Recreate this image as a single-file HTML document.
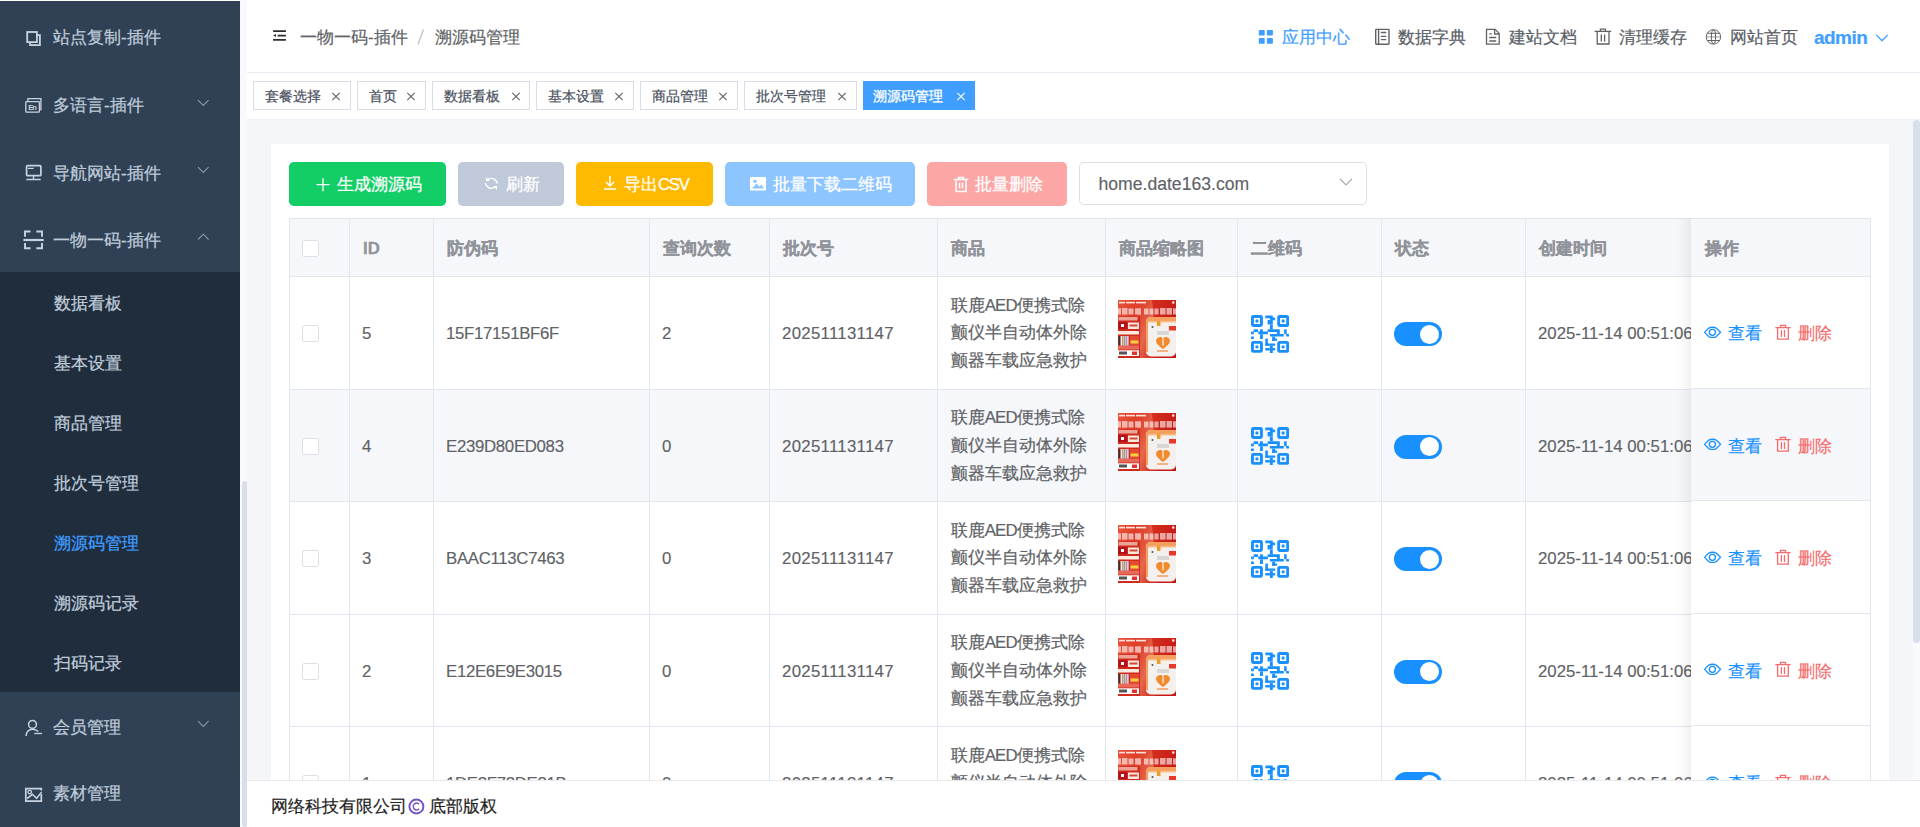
<!DOCTYPE html>
<html><head><meta charset="utf-8">
<style>
*{box-sizing:border-box;margin:0;padding:0}
html,body{width:1920px;height:827px;overflow:hidden;background:#fff;font-family:"Liberation Sans",sans-serif;}
.side{position:absolute;left:0;top:1px;width:240px;height:826px;background:#304156;overflow:hidden}
.side .topl{position:absolute;left:0;top:0;width:240px;height:1px;background:#3d4d63}
.mi{position:absolute;left:0;width:240px;height:67.2px;color:#bfcbd9;font-size:16.8px;line-height:67.2px}
.mi .tx{position:absolute;left:53px;top:2px;white-space:nowrap;-webkit-text-stroke:0.25px #bfcbd9}
.mi .ar{position:absolute;left:196.5px;top:28.2px}
.sic{position:absolute}
.sub{position:absolute;left:0;top:271px;width:240px;height:420px;background:#1f2d3d}
.si{position:absolute;left:54px;height:60px;line-height:60px;padding-top:2px;color:#bfcbd9;font-size:16.8px;white-space:nowrap;-webkit-text-stroke:0.25px #bfcbd9}
.si.act{color:#409eff;-webkit-text-stroke:0.25px #409eff}
.sbar{position:absolute;left:240px;top:0;width:7px;height:827px;background:#f9fafd}
.sbar .th{position:absolute;left:1px;top:481px;width:6px;height:346px;background:#d9deec;border-radius:3px}
.hdr{position:absolute;left:247px;top:0;width:1673px;height:72.5px;background:#fff;border-bottom:1px solid #e9ecf3}
.abs{position:absolute}
.bc{position:absolute;top:2px;height:72px;line-height:72px;font-size:16.8px;color:#606266;white-space:nowrap;-webkit-text-stroke:0.2px #606266}
.hr{position:absolute;top:2px;height:72px;line-height:72px;font-size:16.8px;color:#5a5e66;white-space:nowrap;-webkit-text-stroke:0.2px currentColor}
.tags{position:absolute;left:247px;top:72.5px;width:1673px;height:47.5px;background:#fff;border-bottom:1px solid #eceff5}
.tag{position:absolute;top:8.5px;height:28.8px;border:1px solid #d8dce5;background:#fff;color:#495060;font-size:14.4px;line-height:28px;padding-left:10.5px;white-space:nowrap;-webkit-text-stroke:0.2px currentColor}
.tag .x{position:absolute;top:10px;color:#606266}
.tag span.t{position:relative;top:1px}
.tag.act{background:#409eff;border-color:#409eff;color:#fff;padding-left:9px;-webkit-text-stroke:0.3px #fff}
.tag.act .x{color:#fff}
.mainbg{position:absolute;left:247px;top:120px;width:1666px;height:707px;background:#f5f6f8}
.card{position:absolute;left:271px;top:144px;width:1618px;height:700px;background:#fff}
.btn{position:absolute;top:162px;height:43.8px;border-radius:4.8px;color:#fff;font-size:16.8px;line-height:43.8px;white-space:nowrap}
.btn svg{position:absolute;top:14px}
.btn .t{position:absolute;top:1.2px;-webkit-text-stroke:0.25px #fff}
.sel{position:absolute;left:1079px;top:162px;width:288px;height:43px;border:1px solid #dcdfe6;border-radius:4.8px;background:#fff}
.sel .t{position:absolute;left:18.5px;top:1px;line-height:41px;font-size:17.6px;color:#606266;-webkit-text-stroke:0.15px #606266}
.sel svg{position:absolute;left:259px;top:15.2px}
.tbl{position:absolute;left:289px;top:218px;width:1402px;height:620px;overflow:hidden}
.thead{position:absolute;left:0;top:0;width:1600px;height:59px;background:#f5f7fa;border-top:1px solid #e2e6ef;border-bottom:1px solid #e2e6ef}
.th{position:absolute;top:0.5px;margin-left:1px;line-height:57px;font-size:16.8px;font-weight:bold;color:#909399;white-space:nowrap;-webkit-text-stroke:0.3px #909399}
.vl{position:absolute;top:0;width:1px;height:620px;background:#e2e6ef}
.row{position:absolute;left:0;width:1600px;height:112.5px;border-bottom:1px solid #e2e6ef;background:#fff}
.row.stripe{background:#f5f7fa}
.rows{position:absolute;left:0;top:-218px;width:1600px;height:1000px}
.c{position:absolute;top:1px;line-height:112px;font-size:16.8px;color:#606266;white-space:nowrap;-webkit-text-stroke:0.15px #606266}
.prod{position:absolute;top:14.5px;line-height:27.8px;font-size:16.8px;color:#606266;white-space:nowrap;-webkit-text-stroke:0.2px #606266}
.cb{position:absolute;top:48.4px;width:16.8px;height:16.8px;border:1px solid #dcdfe6;border-radius:2.4px;background:#fff}
.pimg{position:absolute;top:23.2px;width:58px;height:58px}
.qr{position:absolute;top:37.5px;width:38px;height:38px}
.sw{position:absolute;top:45px;width:48px;height:24px;border-radius:12px;background:#1890ff}
.sw i{position:absolute;left:25.5px;top:2.5px;width:19px;height:19px;border-radius:50%;background:#fff}
.fix{position:absolute;left:1691px;top:218px;width:180px;height:620px;background:#fff;overflow:visible}
.fix .shd{position:absolute;left:-16px;top:0;width:16px;height:620px;background:linear-gradient(to left,rgba(0,0,0,.055),rgba(0,0,0,.02) 50%,rgba(0,0,0,0))}
.fix .clip{position:absolute;left:0;top:0;width:181px;height:620px;overflow:hidden}
.fix .fh{position:absolute;left:0;top:0;width:180px;height:59px;background:#f5f7fa;border-top:1px solid #e2e6ef;border-bottom:1px solid #e2e6ef;border-right:1px solid #e2e6ef}
.frow{position:absolute;left:0;width:180px;height:112.5px;border-bottom:1px solid #e2e6ef;border-right:1px solid #e2e6ef;background:#fff;line-height:112px;font-size:16.8px;white-space:nowrap}
.frow.stripe{background:#f5f7fa}
.frow .view{position:absolute;left:36.5px;top:2px;color:#1890ff;-webkit-text-stroke:0.15px #1890ff}
.frow .del{position:absolute;left:107px;top:2px;color:#f56c6c;-webkit-text-stroke:0.15px #f56c6c}
.frow .ico{position:absolute;top:43.6px}
.frow svg:first-child{color:#1890ff}
.frow svg.t2{color:#f56c6c}
.foot{position:absolute;left:247px;top:780px;width:1673px;height:47px;background:#fff;border-top:1px solid #e8eaed;z-index:5}
.foot .t{position:absolute;left:25px;top:0.6px;line-height:50px;font-size:16.8px;color:#222;white-space:nowrap;-webkit-text-stroke:0.2px #222}
.mbar{position:absolute;left:1913px;top:120px;width:7px;height:660px;background:#f9fafd}
.mbar .th2{position:absolute;left:0;top:0;width:7px;height:523px;background:#d9deec;border-radius:3.5px}

</style></head><body>
<div class="side">
  <div class="mi" style="top:0.7px"><span class="tx">站点复制-插件</span></div>
  <div class="mi" style="top:69.4px"><span class="tx">多语言-插件</span><svg class="ar" width="13" height="8" viewBox="0 0 13 8"><path d="M1 1.2l5.3 5.3 5.3-5.3" fill="none" stroke="#8d97a6" stroke-width="1.1"/></svg></div>
  <div class="mi" style="top:136.6px"><span class="tx">导航网站-插件</span><svg class="ar" width="13" height="8" viewBox="0 0 13 8"><path d="M1 1.2l5.3 5.3 5.3-5.3" fill="none" stroke="#8d97a6" stroke-width="1.1"/></svg></div>
  <div class="mi" style="top:203.8px"><span class="tx">一物一码-插件</span><svg class="ar" width="13" height="8" viewBox="0 0 13 8" style="top:28.5px"><path d="M1 6.5l5.3-5.3 5.3 5.3" fill="none" stroke="#8d97a6" stroke-width="1.1"/></svg></div>
  <div class="sub">
    <div class="si" style="top:0">数据看板</div>
    <div class="si" style="top:60px">基本设置</div>
    <div class="si" style="top:120px">商品管理</div>
    <div class="si" style="top:180px">批次号管理</div>
    <div class="si act" style="top:240px">溯源码管理</div>
    <div class="si" style="top:300px">溯源码记录</div>
    <div class="si" style="top:360px">扫码记录</div>
  </div>
  <div class="mi" style="top:691px"><span class="tx">会员管理</span><svg class="ar" width="13" height="8" viewBox="0 0 13 8"><path d="M1 1.2l5.3 5.3 5.3-5.3" fill="none" stroke="#8d97a6" stroke-width="1.1"/></svg></div>
  <div class="mi" style="top:757.4px"><span class="tx">素材管理</span></div>
  <svg class="sic" style="left:20px;top:23px" width="28" height="28" viewBox="0 0 28 28" fill="none" stroke="#c9d3df" stroke-width="1.8"><rect x="7.2" y="8" width="9.7" height="10.1"/><path d="M16.9 11.1H19.9V21.1H10.1V18.1"/></svg>
  <svg class="sic" style="left:20px;top:91px" width="28" height="28" viewBox="0 0 28 28" fill="none" stroke="#c9d3df" stroke-width="1.3"><path d="M7.9 9.6V6.6H20.9V17.6H19.4"/><rect x="5.8" y="9.6" width="13.6" height="10.6" rx="0.8"/><text x="8.2" y="17.9" font-size="7.6" textLength="8.8" font-family="Liberation Sans" fill="#c9d3df" stroke="none" font-weight="bold">En</text></svg>
  <svg class="sic" style="left:20px;top:157px" width="28" height="28" viewBox="0 0 28 28" fill="none" stroke="#c9d3df" stroke-width="1.7"><rect x="6.6" y="7.7" width="14.3" height="10" rx="1"/><path d="M8 10.4h5.6" stroke-width="1.2"/><path d="M13.5 17.7V21.3M6.4 21.5H20.7" stroke-width="1.4"/></svg>
  <svg class="sic" style="left:20px;top:225px" width="28" height="28" viewBox="0 0 28 28" fill="none" stroke="#c9d3df" stroke-width="1.9"><path d="M5 10.8V5.5H10.5M16.3 5.5H22V10.8M5 17V22.3H10.5M16.3 22.3H22V17"/><path d="M3.4 14H23.7" stroke-width="2.2"/></svg>
  <svg class="sic" style="left:20px;top:712px" width="28" height="28" viewBox="0 0 28 28" fill="none" stroke="#c9d3df" stroke-width="1.5"><circle cx="12.5" cy="11.4" r="3.9"/><path d="M6.1 23C6.1 19 9 16.2 12.5 16.2C15 16.2 17 17.3 18.2 18.6"/><path d="M14.2 20.5H22" stroke-width="1.3"/></svg>
  <svg class="sic" style="left:20px;top:777px" width="28" height="28" viewBox="0 0 28 28" fill="none" stroke="#c9d3df" stroke-width="1.7"><path d="M21.3 12.5V10.7H5.8V23.2H21.3V16"/><circle cx="9.7" cy="14.1" r="1.8" stroke-width="1.3"/><path d="M7.1 20.7L12.4 16.3L16.6 20.3L21.7 13.9" stroke-width="1.5"/></svg>
</div>
<div class="sbar"><div class="th"></div></div>

<div class="hdr"></div>
<svg class="abs" style="left:266px;top:24px" width="28" height="24" viewBox="0 0 28 24"><path d="M7.1 7.15H19.9M11.6 11.65H19.9M7.1 15.85H19.9" stroke="#2b2d31" stroke-width="1.9"/><path d="M7.2 11.45L10 9.9V13z" fill="#2b2d31"/></svg>
<div class="bc" style="left:300px">一物一码-插件</div>
<svg class="abs" style="left:410px;top:24px" width="20" height="26" viewBox="0 0 20 26"><path d="M8 20.5L13.5 5.5" stroke="#c0c4cc" stroke-width="1.4"/></svg>
<div class="bc" style="left:435px">溯源码管理</div>
<svg class="abs" style="left:1252px;top:24px" width="28" height="26" viewBox="0 0 28 26"><g fill="#409eff"><rect x="6.8" y="6" width="5.9" height="5.6" rx="0.8"/><rect x="14.9" y="6" width="6" height="5.6" rx="0.8"/><rect x="6.8" y="14" width="5.9" height="5.8" rx="0.8"/><rect x="14.9" y="14" width="6" height="5.8" rx="0.8"/></g></svg>
<div class="hr" style="left:1282px;color:#409eff">应用中心</div>
<svg class="abs" style="left:1370px;top:24px" width="30" height="26" viewBox="0 0 30 26" fill="none" stroke="#606266" stroke-width="1.4"><rect x="5.7" y="5.4" width="13.3" height="14.8" rx="0.6"/><path d="M8.6 5.4V20.2"/><path d="M11.3 8.5H15.8M11.3 12.3H15.8M11.3 15.6H15.8" stroke-width="1.3" stroke-linecap="round"/></svg>
<div class="hr" style="left:1398px">数据字典</div>
<svg class="abs" style="left:1480px;top:24px" width="26" height="26" viewBox="0 0 26 26" fill="none" stroke="#606266" stroke-width="1.3"><path d="M6.5 5.4H15.2L19.2 9.4V20.2H6.5Z"/><path d="M14.6 5.4V10H19.2"/><path d="M9.3 9.9H11.8M9.3 13.5H16.2M9.3 17H16.2" stroke-width="1.3"/></svg>
<div class="hr" style="left:1508.5px">建站文档</div>
<svg class="abs" style="left:1590px;top:24px" width="26" height="26" viewBox="0 0 26 26" fill="none" stroke="#606266" stroke-width="1.3"><path d="M4.6 7.4H21.2"/><path d="M10.4 7.4V5.2H15.4V7.4"/><path d="M7.2 7.4V20H19V7.4"/><path d="M11.3 11V17M14.6 11V17" stroke-linecap="round"/></svg>
<div class="hr" style="left:1619px">清理缓存</div>
<svg class="abs" style="left:1700px;top:24px" width="26" height="26" viewBox="0 0 26 26" fill="none" stroke="#606266" stroke-width="1"><circle cx="13.45" cy="12.9" r="7.2"/><path d="M7.6 9.3H19.3M7.6 16.5H19.3"/><path d="M6.5 12.9H20.4" stroke-width="0.6"/><path d="M13.45 5.7Q11.4 7.5 11.4 10V15.8Q11.4 18.3 13.45 20.1M13.45 5.7Q15.5 7.5 15.5 10V15.8Q15.5 18.3 13.45 20.1"/></svg>
<div class="hr" style="left:1730px">网站首页</div>
<div class="hr" style="left:1814px;color:#409eff;font-weight:bold;font-size:19px;letter-spacing:-0.55px;line-height:72px">admin</div>
<svg class="abs" style="left:1872px;top:30px" width="20" height="16" viewBox="0 0 20 16"><path d="M4.2 4.9L10 10.8L15.8 4.9" fill="none" stroke="#409eff" stroke-width="1.3"/></svg>

<div class="tags">
  <div class="tag" style="left:6px;width:98px">套餐选择<svg class="x" style="left:77.3px" width="10" height="9" viewBox="0 0 10 9"><path d="M1.3 0.8L8.7 8.2M8.7 0.8L1.3 8.2" stroke="currentColor" stroke-width="1.1"/></svg></div>
  <div class="tag" style="left:110.2px;width:68.4px">首页<svg class="x" style="left:47.5px" width="10" height="9" viewBox="0 0 10 9"><path d="M1.3 0.8L8.7 8.2M8.7 0.8L1.3 8.2" stroke="currentColor" stroke-width="1.1"/></svg></div>
  <div class="tag" style="left:185.4px;width:98px">数据看板<svg class="x" style="left:77.3px" width="10" height="9" viewBox="0 0 10 9"><path d="M1.3 0.8L8.7 8.2M8.7 0.8L1.3 8.2" stroke="currentColor" stroke-width="1.1"/></svg></div>
  <div class="tag" style="left:289.1px;width:98px">基本设置<svg class="x" style="left:77.3px" width="10" height="9" viewBox="0 0 10 9"><path d="M1.3 0.8L8.7 8.2M8.7 0.8L1.3 8.2" stroke="currentColor" stroke-width="1.1"/></svg></div>
  <div class="tag" style="left:393.2px;width:98px">商品管理<svg class="x" style="left:77.3px" width="10" height="9" viewBox="0 0 10 9"><path d="M1.3 0.8L8.7 8.2M8.7 0.8L1.3 8.2" stroke="currentColor" stroke-width="1.1"/></svg></div>
  <div class="tag" style="left:497.4px;width:112.6px">批次号管理<svg class="x" style="left:91.9px" width="10" height="9" viewBox="0 0 10 9"><path d="M1.3 0.8L8.7 8.2M8.7 0.8L1.3 8.2" stroke="currentColor" stroke-width="1.1"/></svg></div>
  <div class="tag act" style="left:616.1px;width:112px">溯源码管理<svg class="x" style="left:91.6px" width="10" height="9" viewBox="0 0 10 9"><path d="M1.3 0.8L8.7 8.2M8.7 0.8L1.3 8.2" stroke="currentColor" stroke-width="1.1"/></svg></div>
</div>

<div class="mainbg"></div>
<div class="card"></div>

<div class="btn" style="left:289px;width:157px;background:#13ce66"><svg width="15" height="15" viewBox="0 0 15 15" style="left:26.5px;top:15.5px"><path d="M7 0.2v13M0.5 6.7h13" stroke="#fff" stroke-width="1.3"/></svg><span class="t" style="left:48px">生成溯源码</span></div>
<div class="btn" style="left:458px;width:106px;background:#bfc9d9"><svg width="26" height="26" viewBox="0 0 26 26" style="left:20px;top:8px"><path d="M9.6 9.6A6.2 6.2 0 0 1 19.3 13.6M16.6 17.4A6.2 6.2 0 0 1 7.3 13.2" fill="none" stroke="#fff" stroke-width="1.4"/><path d="M7.9 7.1V10.9H11.7Z M19 19.9V16.1H15.2Z" fill="#fff"/></svg><span class="t" style="left:47.5px">刷新</span></div>
<div class="btn" style="left:576px;width:137px;background:#ffba00"><svg width="14" height="14" viewBox="0 0 14 14" style="left:26.5px" fill="none" stroke="#fff" stroke-width="1.5"><path d="M7 0v9.5M3 6l4 4 4-4M1 13h12"/></svg><span class="t" style="left:48px">导出<span style="letter-spacing:-1.3px">CSV</span></span></div>
<div class="btn" style="left:725px;width:190px;background:#8cc5ff"><svg width="16" height="14" viewBox="0 0 16 14" style="left:24.5px;top:15px"><rect x="0" y="0" width="16" height="13.5" rx="1" fill="#fff"/><path d="M2 11.5L6.5 6.5L9.5 9.5L11.5 7.5L14 11.5Z" fill="#8cc5ff"/><circle cx="5" cy="4.2" r="1.7" fill="#8cc5ff"/></svg><span class="t" style="left:47.5px">批量下载二维码</span></div>
<div class="btn" style="left:927px;width:140px;background:#fca6a6"><svg width="16" height="17" viewBox="0 0 16 17" style="left:25.5px;top:13.5px" fill="none" stroke="#fff" stroke-width="1.5"><path d="M0.8 3.5H15.2"/><path d="M5.5 3.3V1.4H10.5V3.3"/><path d="M3 3.5V15.5H13V3.5"/><path d="M6.5 6.8V12.3M9.5 6.8V12.3"/></svg><span class="t" style="left:48px">批量删除</span></div>
<div class="sel"><span class="t">home.date163.com</span><svg width="14" height="8" viewBox="0 0 14 8"><path d="M1 1l6 6 6-6" fill="none" stroke="#a8abb2" stroke-width="1.2"/></svg></div>

<div class="tbl">
  <div class="rows"><div class="row" style="top:277.0px">
 <div class="cb" style="left:13px"></div>
 <div class="c" style="left:73.0px">5</div>
 <div class="c" style="left:157.0px;letter-spacing:-0.3px">15F17151BF6F</div>
 <div class="c" style="left:373.0px">2</div>
 <div class="c" style="left:493.0px;letter-spacing:0.3px">202511131147</div>
 <div class="prod" style="left:661.8px">联鹿<span style="letter-spacing:-0.9px">AED</span>便携式除<br>颤仪半自动体外除<br>颤器车载应急救护</div>
 <div class="pimg" style="left:829.0px"><svg width="58" height="58" viewBox="0 0 58 58">
<defs><linearGradient id="rg" x1="0" y1="0" x2="1" y2="0.3"><stop offset="0" stop-color="#e9553c"/><stop offset=".45" stop-color="#d9321f"/><stop offset="1" stop-color="#c41a16"/></linearGradient>
<linearGradient id="bm" x1="0" y1="0" x2="1" y2="1"><stop offset="0" stop-color="#f27a5c" stop-opacity=".0"/><stop offset=".5" stop-color="#f49a7a" stop-opacity=".55"/><stop offset="1" stop-color="#f27a5c" stop-opacity="0"/></linearGradient></defs>
<rect width="58" height="58" fill="url(#rg)"/>
<path d="M18 0H34L40 58H20z" fill="url(#bm)"/>
<g fill="#fbe3dc"><rect x="1" y="1.8" width="6" height="1.6"/><rect x="8" y="1.8" width="9" height="1.6"/><rect x="18" y="1.8" width="10" height="1.6"/><rect x="54" y="1.2" width="2.5" height="2.5" rx="1"/></g>
<g fill="#fff" opacity=".6"><rect x="0" y="8.3" width="3" height="6.2"/><rect x="4" y="8" width="5.5" height="6.6"/><rect x="10.5" y="8.5" width="5" height="6"/><rect x="17" y="8.3" width="6" height="6.3"/><rect x="26" y="8.5" width="4.5" height="6"/><rect x="31.5" y="8.5" width="4" height="6"/><rect x="36.5" y="8.5" width="4" height="6"/><rect x="42" y="8" width="5.5" height="6.6"/><rect x="48.5" y="8" width="5.5" height="6.6"/><rect x="55" y="8.3" width="3" height="6.2"/></g>
<rect x="0" y="16.5" width="22" height="41.5" fill="#cf2a1c"/>
<rect x="0.5" y="17" width="19" height="3.5" fill="#f8d9cc" opacity=".7"/>
<rect x="0" y="22" width="9" height="7" fill="#b4121a"/><rect x="3" y="24" width="3" height="3" fill="#fff"/>
<rect x="10" y="22.5" width="11" height="6.5" fill="#fde8e2"/><rect x="11.5" y="24.5" width="8" height="2" fill="#d44a3a"/>
<rect x="0" y="31" width="21" height="3.5" fill="#fbeae2"/>
<g><rect x="0.5" y="36" width="1.8" height="12" fill="#333"/><rect x="2.6" y="36" width="1.8" height="12" fill="#eee"/><rect x="4.7" y="36" width="1.8" height="12" fill="#b9d3a0"/><rect x="6.8" y="36" width="1.8" height="12" fill="#b8c8e8"/><rect x="8.9" y="36" width="1.8" height="12" fill="#d8c8ea"/></g>
<rect x="12" y="36" width="9" height="9" fill="#e34a30"/><rect x="12.5" y="40.5" width="8" height="3" fill="#f5d040"/>
<rect x="0" y="45.5" width="21" height="4" fill="#e86a5a"/>
<rect x="0" y="50.3" width="21" height="5.7" fill="#fff"/><rect x="1" y="51.5" width="8" height="3" fill="#555"/><rect x="14" y="51.5" width="5" height="3.5" fill="#e3302a"/>
<rect x="28" y="17" width="30" height="39.5" rx="5" fill="#f3f0ed"/>
<path d="M28 22Q28 17 33 17H58V21H33Q30 21 30 24V52H28Z" fill="#f4a060"/>
<rect x="31" y="21" width="27" height="1.5" fill="#f7c090" />
<rect x="39" y="21" width="3.5" height="5" fill="#f39b2c"/>
<rect x="51" y="26" width="7" height="4.5" fill="#e53a2a"/>
<circle cx="34.5" cy="27" r="1" fill="#555"/>
<rect x="39" y="31" width="12" height="4" fill="#d9d6d3"/>
<path d="M38 41c0-4 6-5.5 7-2 1-3.5 7-2 7 2 0 3.5-7 8-7 8s-7-4.5-7-8z" fill="#f28a2e"/>
<rect x="44.3" y="38.5" width="1.5" height="7" fill="#fbe0c8"/>
<rect x="39" y="50.2" width="11" height="1.6" fill="#f4a36a"/>
</svg>
</div>
 <div class="qr" style="left:961.9px"><svg width="38" height="38" viewBox="0 0 38 38"><g fill="#1890ff" fill-rule="evenodd"><rect x="14.3" y="0.5" width="7.5" height="2.7" rx="0.5"/><rect x="18.9" y="2.4" width="5.2" height="2.8" rx="0.5"/><rect x="16.6" y="5.0" width="5.2" height="4.6" rx="0.5"/><rect x="18.9" y="9.6" width="2.9" height="4.9" rx="0.5"/><rect x="2.6" y="14.3" width="4.6" height="2.6" rx="0.5"/><rect x="0.0" y="16.6" width="2.9" height="2.6" rx="0.5"/><rect x="9.0" y="14.3" width="2.9" height="2.6" rx="0.5"/><rect x="7.3" y="16.6" width="9.6" height="2.6" rx="0.5"/><rect x="9.0" y="19.2" width="2.9" height="4.9" rx="0.5"/><rect x="0.0" y="21.5" width="2.9" height="2.6" rx="0.5"/><rect x="16.6" y="14.3" width="12.2" height="2.6" rx="0.5"/><rect x="25.9" y="16.6" width="2.9" height="2.6" rx="0.5"/><rect x="18.9" y="18.9" width="13.9" height="2.6" rx="0.5"/><rect x="21.2" y="21.5" width="2.9" height="4.4" rx="0.5"/><rect x="21.2" y="23.5" width="4.9" height="2.3" rx="0.5"/><rect x="33.1" y="14.3" width="2.6" height="4.9" rx="0.5"/><rect x="35.1" y="18.9" width="2.9" height="2.6" rx="0.5"/><rect x="14.3" y="23.5" width="2.6" height="7.3" rx="0.5"/><rect x="14.3" y="28.5" width="9.9" height="2.3" rx="0.5"/><rect x="14.3" y="33.1" width="4.6" height="2.3" rx="0.5"/><rect x="18.9" y="30.8" width="2.9" height="7.3" rx="0.5"/><rect x="21.2" y="33.1" width="2.9" height="2.3" rx="0.5"/><path d="M2.4 0.0h7.1a2.4 2.4 0 0 1 2.4 2.4v7.1a2.4 2.4 0 0 1-2.4 2.4h-7.1a2.4 2.4 0 0 1-2.4-2.4v-7.1a2.4 2.4 0 0 1 2.4-2.4zM2.9 2.9v6.1h6.1v-6.1z"/><rect x="4.5" y="4.5" width="2.9" height="2.9" rx="0.4"/><path d="M28.6 0.0h7.1a2.4 2.4 0 0 1 2.4 2.4v7.1a2.4 2.4 0 0 1-2.4 2.4h-7.1a2.4 2.4 0 0 1-2.4-2.4v-7.1a2.4 2.4 0 0 1 2.4-2.4zM29.1 2.9v6.1h6.1v-6.1z"/><rect x="30.7" y="4.5" width="2.9" height="2.9" rx="0.4"/><path d="M2.4 25.9h7.1a2.4 2.4 0 0 1 2.4 2.4v7.1a2.4 2.4 0 0 1-2.4 2.4h-7.1a2.4 2.4 0 0 1-2.4-2.4v-7.1a2.4 2.4 0 0 1 2.4-2.4zM2.9 28.8v6.1h6.1v-6.1z"/><rect x="4.5" y="30.4" width="2.9" height="2.9" rx="0.4"/><path d="M28.6 25.9h7.1a2.4 2.4 0 0 1 2.4 2.4v7.1a2.4 2.4 0 0 1-2.4 2.4h-7.1a2.4 2.4 0 0 1-2.4-2.4v-7.1a2.4 2.4 0 0 1 2.4-2.4zM29.1 28.8v6.1h6.1v-6.1z"/><rect x="30.7" y="30.4" width="2.9" height="2.9" rx="0.4"/></g></svg></div>
 <div class="sw" style="left:1105.0px"><i></i></div>
 <div class="c" style="left:1249.0px">2025-11-14 00:51:06</div>
</div>
<div class="row stripe" style="top:389.5px">
 <div class="cb" style="left:13px"></div>
 <div class="c" style="left:73.0px">4</div>
 <div class="c" style="left:157.0px;letter-spacing:-0.3px">E239D80ED083</div>
 <div class="c" style="left:373.0px">0</div>
 <div class="c" style="left:493.0px;letter-spacing:0.3px">202511131147</div>
 <div class="prod" style="left:661.8px">联鹿<span style="letter-spacing:-0.9px">AED</span>便携式除<br>颤仪半自动体外除<br>颤器车载应急救护</div>
 <div class="pimg" style="left:829.0px"><svg width="58" height="58" viewBox="0 0 58 58">
<defs><linearGradient id="rg" x1="0" y1="0" x2="1" y2="0.3"><stop offset="0" stop-color="#e9553c"/><stop offset=".45" stop-color="#d9321f"/><stop offset="1" stop-color="#c41a16"/></linearGradient>
<linearGradient id="bm" x1="0" y1="0" x2="1" y2="1"><stop offset="0" stop-color="#f27a5c" stop-opacity=".0"/><stop offset=".5" stop-color="#f49a7a" stop-opacity=".55"/><stop offset="1" stop-color="#f27a5c" stop-opacity="0"/></linearGradient></defs>
<rect width="58" height="58" fill="url(#rg)"/>
<path d="M18 0H34L40 58H20z" fill="url(#bm)"/>
<g fill="#fbe3dc"><rect x="1" y="1.8" width="6" height="1.6"/><rect x="8" y="1.8" width="9" height="1.6"/><rect x="18" y="1.8" width="10" height="1.6"/><rect x="54" y="1.2" width="2.5" height="2.5" rx="1"/></g>
<g fill="#fff" opacity=".6"><rect x="0" y="8.3" width="3" height="6.2"/><rect x="4" y="8" width="5.5" height="6.6"/><rect x="10.5" y="8.5" width="5" height="6"/><rect x="17" y="8.3" width="6" height="6.3"/><rect x="26" y="8.5" width="4.5" height="6"/><rect x="31.5" y="8.5" width="4" height="6"/><rect x="36.5" y="8.5" width="4" height="6"/><rect x="42" y="8" width="5.5" height="6.6"/><rect x="48.5" y="8" width="5.5" height="6.6"/><rect x="55" y="8.3" width="3" height="6.2"/></g>
<rect x="0" y="16.5" width="22" height="41.5" fill="#cf2a1c"/>
<rect x="0.5" y="17" width="19" height="3.5" fill="#f8d9cc" opacity=".7"/>
<rect x="0" y="22" width="9" height="7" fill="#b4121a"/><rect x="3" y="24" width="3" height="3" fill="#fff"/>
<rect x="10" y="22.5" width="11" height="6.5" fill="#fde8e2"/><rect x="11.5" y="24.5" width="8" height="2" fill="#d44a3a"/>
<rect x="0" y="31" width="21" height="3.5" fill="#fbeae2"/>
<g><rect x="0.5" y="36" width="1.8" height="12" fill="#333"/><rect x="2.6" y="36" width="1.8" height="12" fill="#eee"/><rect x="4.7" y="36" width="1.8" height="12" fill="#b9d3a0"/><rect x="6.8" y="36" width="1.8" height="12" fill="#b8c8e8"/><rect x="8.9" y="36" width="1.8" height="12" fill="#d8c8ea"/></g>
<rect x="12" y="36" width="9" height="9" fill="#e34a30"/><rect x="12.5" y="40.5" width="8" height="3" fill="#f5d040"/>
<rect x="0" y="45.5" width="21" height="4" fill="#e86a5a"/>
<rect x="0" y="50.3" width="21" height="5.7" fill="#fff"/><rect x="1" y="51.5" width="8" height="3" fill="#555"/><rect x="14" y="51.5" width="5" height="3.5" fill="#e3302a"/>
<rect x="28" y="17" width="30" height="39.5" rx="5" fill="#f3f0ed"/>
<path d="M28 22Q28 17 33 17H58V21H33Q30 21 30 24V52H28Z" fill="#f4a060"/>
<rect x="31" y="21" width="27" height="1.5" fill="#f7c090" />
<rect x="39" y="21" width="3.5" height="5" fill="#f39b2c"/>
<rect x="51" y="26" width="7" height="4.5" fill="#e53a2a"/>
<circle cx="34.5" cy="27" r="1" fill="#555"/>
<rect x="39" y="31" width="12" height="4" fill="#d9d6d3"/>
<path d="M38 41c0-4 6-5.5 7-2 1-3.5 7-2 7 2 0 3.5-7 8-7 8s-7-4.5-7-8z" fill="#f28a2e"/>
<rect x="44.3" y="38.5" width="1.5" height="7" fill="#fbe0c8"/>
<rect x="39" y="50.2" width="11" height="1.6" fill="#f4a36a"/>
</svg>
</div>
 <div class="qr" style="left:961.9px"><svg width="38" height="38" viewBox="0 0 38 38"><g fill="#1890ff" fill-rule="evenodd"><rect x="14.3" y="0.5" width="7.5" height="2.7" rx="0.5"/><rect x="18.9" y="2.4" width="5.2" height="2.8" rx="0.5"/><rect x="16.6" y="5.0" width="5.2" height="4.6" rx="0.5"/><rect x="18.9" y="9.6" width="2.9" height="4.9" rx="0.5"/><rect x="2.6" y="14.3" width="4.6" height="2.6" rx="0.5"/><rect x="0.0" y="16.6" width="2.9" height="2.6" rx="0.5"/><rect x="9.0" y="14.3" width="2.9" height="2.6" rx="0.5"/><rect x="7.3" y="16.6" width="9.6" height="2.6" rx="0.5"/><rect x="9.0" y="19.2" width="2.9" height="4.9" rx="0.5"/><rect x="0.0" y="21.5" width="2.9" height="2.6" rx="0.5"/><rect x="16.6" y="14.3" width="12.2" height="2.6" rx="0.5"/><rect x="25.9" y="16.6" width="2.9" height="2.6" rx="0.5"/><rect x="18.9" y="18.9" width="13.9" height="2.6" rx="0.5"/><rect x="21.2" y="21.5" width="2.9" height="4.4" rx="0.5"/><rect x="21.2" y="23.5" width="4.9" height="2.3" rx="0.5"/><rect x="33.1" y="14.3" width="2.6" height="4.9" rx="0.5"/><rect x="35.1" y="18.9" width="2.9" height="2.6" rx="0.5"/><rect x="14.3" y="23.5" width="2.6" height="7.3" rx="0.5"/><rect x="14.3" y="28.5" width="9.9" height="2.3" rx="0.5"/><rect x="14.3" y="33.1" width="4.6" height="2.3" rx="0.5"/><rect x="18.9" y="30.8" width="2.9" height="7.3" rx="0.5"/><rect x="21.2" y="33.1" width="2.9" height="2.3" rx="0.5"/><path d="M2.4 0.0h7.1a2.4 2.4 0 0 1 2.4 2.4v7.1a2.4 2.4 0 0 1-2.4 2.4h-7.1a2.4 2.4 0 0 1-2.4-2.4v-7.1a2.4 2.4 0 0 1 2.4-2.4zM2.9 2.9v6.1h6.1v-6.1z"/><rect x="4.5" y="4.5" width="2.9" height="2.9" rx="0.4"/><path d="M28.6 0.0h7.1a2.4 2.4 0 0 1 2.4 2.4v7.1a2.4 2.4 0 0 1-2.4 2.4h-7.1a2.4 2.4 0 0 1-2.4-2.4v-7.1a2.4 2.4 0 0 1 2.4-2.4zM29.1 2.9v6.1h6.1v-6.1z"/><rect x="30.7" y="4.5" width="2.9" height="2.9" rx="0.4"/><path d="M2.4 25.9h7.1a2.4 2.4 0 0 1 2.4 2.4v7.1a2.4 2.4 0 0 1-2.4 2.4h-7.1a2.4 2.4 0 0 1-2.4-2.4v-7.1a2.4 2.4 0 0 1 2.4-2.4zM2.9 28.8v6.1h6.1v-6.1z"/><rect x="4.5" y="30.4" width="2.9" height="2.9" rx="0.4"/><path d="M28.6 25.9h7.1a2.4 2.4 0 0 1 2.4 2.4v7.1a2.4 2.4 0 0 1-2.4 2.4h-7.1a2.4 2.4 0 0 1-2.4-2.4v-7.1a2.4 2.4 0 0 1 2.4-2.4zM29.1 28.8v6.1h6.1v-6.1z"/><rect x="30.7" y="30.4" width="2.9" height="2.9" rx="0.4"/></g></svg></div>
 <div class="sw" style="left:1105.0px"><i></i></div>
 <div class="c" style="left:1249.0px">2025-11-14 00:51:06</div>
</div>
<div class="row" style="top:502.0px">
 <div class="cb" style="left:13px"></div>
 <div class="c" style="left:73.0px">3</div>
 <div class="c" style="left:157.0px;letter-spacing:-0.3px">BAAC113C7463</div>
 <div class="c" style="left:373.0px">0</div>
 <div class="c" style="left:493.0px;letter-spacing:0.3px">202511131147</div>
 <div class="prod" style="left:661.8px">联鹿<span style="letter-spacing:-0.9px">AED</span>便携式除<br>颤仪半自动体外除<br>颤器车载应急救护</div>
 <div class="pimg" style="left:829.0px"><svg width="58" height="58" viewBox="0 0 58 58">
<defs><linearGradient id="rg" x1="0" y1="0" x2="1" y2="0.3"><stop offset="0" stop-color="#e9553c"/><stop offset=".45" stop-color="#d9321f"/><stop offset="1" stop-color="#c41a16"/></linearGradient>
<linearGradient id="bm" x1="0" y1="0" x2="1" y2="1"><stop offset="0" stop-color="#f27a5c" stop-opacity=".0"/><stop offset=".5" stop-color="#f49a7a" stop-opacity=".55"/><stop offset="1" stop-color="#f27a5c" stop-opacity="0"/></linearGradient></defs>
<rect width="58" height="58" fill="url(#rg)"/>
<path d="M18 0H34L40 58H20z" fill="url(#bm)"/>
<g fill="#fbe3dc"><rect x="1" y="1.8" width="6" height="1.6"/><rect x="8" y="1.8" width="9" height="1.6"/><rect x="18" y="1.8" width="10" height="1.6"/><rect x="54" y="1.2" width="2.5" height="2.5" rx="1"/></g>
<g fill="#fff" opacity=".6"><rect x="0" y="8.3" width="3" height="6.2"/><rect x="4" y="8" width="5.5" height="6.6"/><rect x="10.5" y="8.5" width="5" height="6"/><rect x="17" y="8.3" width="6" height="6.3"/><rect x="26" y="8.5" width="4.5" height="6"/><rect x="31.5" y="8.5" width="4" height="6"/><rect x="36.5" y="8.5" width="4" height="6"/><rect x="42" y="8" width="5.5" height="6.6"/><rect x="48.5" y="8" width="5.5" height="6.6"/><rect x="55" y="8.3" width="3" height="6.2"/></g>
<rect x="0" y="16.5" width="22" height="41.5" fill="#cf2a1c"/>
<rect x="0.5" y="17" width="19" height="3.5" fill="#f8d9cc" opacity=".7"/>
<rect x="0" y="22" width="9" height="7" fill="#b4121a"/><rect x="3" y="24" width="3" height="3" fill="#fff"/>
<rect x="10" y="22.5" width="11" height="6.5" fill="#fde8e2"/><rect x="11.5" y="24.5" width="8" height="2" fill="#d44a3a"/>
<rect x="0" y="31" width="21" height="3.5" fill="#fbeae2"/>
<g><rect x="0.5" y="36" width="1.8" height="12" fill="#333"/><rect x="2.6" y="36" width="1.8" height="12" fill="#eee"/><rect x="4.7" y="36" width="1.8" height="12" fill="#b9d3a0"/><rect x="6.8" y="36" width="1.8" height="12" fill="#b8c8e8"/><rect x="8.9" y="36" width="1.8" height="12" fill="#d8c8ea"/></g>
<rect x="12" y="36" width="9" height="9" fill="#e34a30"/><rect x="12.5" y="40.5" width="8" height="3" fill="#f5d040"/>
<rect x="0" y="45.5" width="21" height="4" fill="#e86a5a"/>
<rect x="0" y="50.3" width="21" height="5.7" fill="#fff"/><rect x="1" y="51.5" width="8" height="3" fill="#555"/><rect x="14" y="51.5" width="5" height="3.5" fill="#e3302a"/>
<rect x="28" y="17" width="30" height="39.5" rx="5" fill="#f3f0ed"/>
<path d="M28 22Q28 17 33 17H58V21H33Q30 21 30 24V52H28Z" fill="#f4a060"/>
<rect x="31" y="21" width="27" height="1.5" fill="#f7c090" />
<rect x="39" y="21" width="3.5" height="5" fill="#f39b2c"/>
<rect x="51" y="26" width="7" height="4.5" fill="#e53a2a"/>
<circle cx="34.5" cy="27" r="1" fill="#555"/>
<rect x="39" y="31" width="12" height="4" fill="#d9d6d3"/>
<path d="M38 41c0-4 6-5.5 7-2 1-3.5 7-2 7 2 0 3.5-7 8-7 8s-7-4.5-7-8z" fill="#f28a2e"/>
<rect x="44.3" y="38.5" width="1.5" height="7" fill="#fbe0c8"/>
<rect x="39" y="50.2" width="11" height="1.6" fill="#f4a36a"/>
</svg>
</div>
 <div class="qr" style="left:961.9px"><svg width="38" height="38" viewBox="0 0 38 38"><g fill="#1890ff" fill-rule="evenodd"><rect x="14.3" y="0.5" width="7.5" height="2.7" rx="0.5"/><rect x="18.9" y="2.4" width="5.2" height="2.8" rx="0.5"/><rect x="16.6" y="5.0" width="5.2" height="4.6" rx="0.5"/><rect x="18.9" y="9.6" width="2.9" height="4.9" rx="0.5"/><rect x="2.6" y="14.3" width="4.6" height="2.6" rx="0.5"/><rect x="0.0" y="16.6" width="2.9" height="2.6" rx="0.5"/><rect x="9.0" y="14.3" width="2.9" height="2.6" rx="0.5"/><rect x="7.3" y="16.6" width="9.6" height="2.6" rx="0.5"/><rect x="9.0" y="19.2" width="2.9" height="4.9" rx="0.5"/><rect x="0.0" y="21.5" width="2.9" height="2.6" rx="0.5"/><rect x="16.6" y="14.3" width="12.2" height="2.6" rx="0.5"/><rect x="25.9" y="16.6" width="2.9" height="2.6" rx="0.5"/><rect x="18.9" y="18.9" width="13.9" height="2.6" rx="0.5"/><rect x="21.2" y="21.5" width="2.9" height="4.4" rx="0.5"/><rect x="21.2" y="23.5" width="4.9" height="2.3" rx="0.5"/><rect x="33.1" y="14.3" width="2.6" height="4.9" rx="0.5"/><rect x="35.1" y="18.9" width="2.9" height="2.6" rx="0.5"/><rect x="14.3" y="23.5" width="2.6" height="7.3" rx="0.5"/><rect x="14.3" y="28.5" width="9.9" height="2.3" rx="0.5"/><rect x="14.3" y="33.1" width="4.6" height="2.3" rx="0.5"/><rect x="18.9" y="30.8" width="2.9" height="7.3" rx="0.5"/><rect x="21.2" y="33.1" width="2.9" height="2.3" rx="0.5"/><path d="M2.4 0.0h7.1a2.4 2.4 0 0 1 2.4 2.4v7.1a2.4 2.4 0 0 1-2.4 2.4h-7.1a2.4 2.4 0 0 1-2.4-2.4v-7.1a2.4 2.4 0 0 1 2.4-2.4zM2.9 2.9v6.1h6.1v-6.1z"/><rect x="4.5" y="4.5" width="2.9" height="2.9" rx="0.4"/><path d="M28.6 0.0h7.1a2.4 2.4 0 0 1 2.4 2.4v7.1a2.4 2.4 0 0 1-2.4 2.4h-7.1a2.4 2.4 0 0 1-2.4-2.4v-7.1a2.4 2.4 0 0 1 2.4-2.4zM29.1 2.9v6.1h6.1v-6.1z"/><rect x="30.7" y="4.5" width="2.9" height="2.9" rx="0.4"/><path d="M2.4 25.9h7.1a2.4 2.4 0 0 1 2.4 2.4v7.1a2.4 2.4 0 0 1-2.4 2.4h-7.1a2.4 2.4 0 0 1-2.4-2.4v-7.1a2.4 2.4 0 0 1 2.4-2.4zM2.9 28.8v6.1h6.1v-6.1z"/><rect x="4.5" y="30.4" width="2.9" height="2.9" rx="0.4"/><path d="M28.6 25.9h7.1a2.4 2.4 0 0 1 2.4 2.4v7.1a2.4 2.4 0 0 1-2.4 2.4h-7.1a2.4 2.4 0 0 1-2.4-2.4v-7.1a2.4 2.4 0 0 1 2.4-2.4zM29.1 28.8v6.1h6.1v-6.1z"/><rect x="30.7" y="30.4" width="2.9" height="2.9" rx="0.4"/></g></svg></div>
 <div class="sw" style="left:1105.0px"><i></i></div>
 <div class="c" style="left:1249.0px">2025-11-14 00:51:06</div>
</div>
<div class="row" style="top:614.5px">
 <div class="cb" style="left:13px"></div>
 <div class="c" style="left:73.0px">2</div>
 <div class="c" style="left:157.0px;letter-spacing:-0.3px">E12E6E9E3015</div>
 <div class="c" style="left:373.0px">0</div>
 <div class="c" style="left:493.0px;letter-spacing:0.3px">202511131147</div>
 <div class="prod" style="left:661.8px">联鹿<span style="letter-spacing:-0.9px">AED</span>便携式除<br>颤仪半自动体外除<br>颤器车载应急救护</div>
 <div class="pimg" style="left:829.0px"><svg width="58" height="58" viewBox="0 0 58 58">
<defs><linearGradient id="rg" x1="0" y1="0" x2="1" y2="0.3"><stop offset="0" stop-color="#e9553c"/><stop offset=".45" stop-color="#d9321f"/><stop offset="1" stop-color="#c41a16"/></linearGradient>
<linearGradient id="bm" x1="0" y1="0" x2="1" y2="1"><stop offset="0" stop-color="#f27a5c" stop-opacity=".0"/><stop offset=".5" stop-color="#f49a7a" stop-opacity=".55"/><stop offset="1" stop-color="#f27a5c" stop-opacity="0"/></linearGradient></defs>
<rect width="58" height="58" fill="url(#rg)"/>
<path d="M18 0H34L40 58H20z" fill="url(#bm)"/>
<g fill="#fbe3dc"><rect x="1" y="1.8" width="6" height="1.6"/><rect x="8" y="1.8" width="9" height="1.6"/><rect x="18" y="1.8" width="10" height="1.6"/><rect x="54" y="1.2" width="2.5" height="2.5" rx="1"/></g>
<g fill="#fff" opacity=".6"><rect x="0" y="8.3" width="3" height="6.2"/><rect x="4" y="8" width="5.5" height="6.6"/><rect x="10.5" y="8.5" width="5" height="6"/><rect x="17" y="8.3" width="6" height="6.3"/><rect x="26" y="8.5" width="4.5" height="6"/><rect x="31.5" y="8.5" width="4" height="6"/><rect x="36.5" y="8.5" width="4" height="6"/><rect x="42" y="8" width="5.5" height="6.6"/><rect x="48.5" y="8" width="5.5" height="6.6"/><rect x="55" y="8.3" width="3" height="6.2"/></g>
<rect x="0" y="16.5" width="22" height="41.5" fill="#cf2a1c"/>
<rect x="0.5" y="17" width="19" height="3.5" fill="#f8d9cc" opacity=".7"/>
<rect x="0" y="22" width="9" height="7" fill="#b4121a"/><rect x="3" y="24" width="3" height="3" fill="#fff"/>
<rect x="10" y="22.5" width="11" height="6.5" fill="#fde8e2"/><rect x="11.5" y="24.5" width="8" height="2" fill="#d44a3a"/>
<rect x="0" y="31" width="21" height="3.5" fill="#fbeae2"/>
<g><rect x="0.5" y="36" width="1.8" height="12" fill="#333"/><rect x="2.6" y="36" width="1.8" height="12" fill="#eee"/><rect x="4.7" y="36" width="1.8" height="12" fill="#b9d3a0"/><rect x="6.8" y="36" width="1.8" height="12" fill="#b8c8e8"/><rect x="8.9" y="36" width="1.8" height="12" fill="#d8c8ea"/></g>
<rect x="12" y="36" width="9" height="9" fill="#e34a30"/><rect x="12.5" y="40.5" width="8" height="3" fill="#f5d040"/>
<rect x="0" y="45.5" width="21" height="4" fill="#e86a5a"/>
<rect x="0" y="50.3" width="21" height="5.7" fill="#fff"/><rect x="1" y="51.5" width="8" height="3" fill="#555"/><rect x="14" y="51.5" width="5" height="3.5" fill="#e3302a"/>
<rect x="28" y="17" width="30" height="39.5" rx="5" fill="#f3f0ed"/>
<path d="M28 22Q28 17 33 17H58V21H33Q30 21 30 24V52H28Z" fill="#f4a060"/>
<rect x="31" y="21" width="27" height="1.5" fill="#f7c090" />
<rect x="39" y="21" width="3.5" height="5" fill="#f39b2c"/>
<rect x="51" y="26" width="7" height="4.5" fill="#e53a2a"/>
<circle cx="34.5" cy="27" r="1" fill="#555"/>
<rect x="39" y="31" width="12" height="4" fill="#d9d6d3"/>
<path d="M38 41c0-4 6-5.5 7-2 1-3.5 7-2 7 2 0 3.5-7 8-7 8s-7-4.5-7-8z" fill="#f28a2e"/>
<rect x="44.3" y="38.5" width="1.5" height="7" fill="#fbe0c8"/>
<rect x="39" y="50.2" width="11" height="1.6" fill="#f4a36a"/>
</svg>
</div>
 <div class="qr" style="left:961.9px"><svg width="38" height="38" viewBox="0 0 38 38"><g fill="#1890ff" fill-rule="evenodd"><rect x="14.3" y="0.5" width="7.5" height="2.7" rx="0.5"/><rect x="18.9" y="2.4" width="5.2" height="2.8" rx="0.5"/><rect x="16.6" y="5.0" width="5.2" height="4.6" rx="0.5"/><rect x="18.9" y="9.6" width="2.9" height="4.9" rx="0.5"/><rect x="2.6" y="14.3" width="4.6" height="2.6" rx="0.5"/><rect x="0.0" y="16.6" width="2.9" height="2.6" rx="0.5"/><rect x="9.0" y="14.3" width="2.9" height="2.6" rx="0.5"/><rect x="7.3" y="16.6" width="9.6" height="2.6" rx="0.5"/><rect x="9.0" y="19.2" width="2.9" height="4.9" rx="0.5"/><rect x="0.0" y="21.5" width="2.9" height="2.6" rx="0.5"/><rect x="16.6" y="14.3" width="12.2" height="2.6" rx="0.5"/><rect x="25.9" y="16.6" width="2.9" height="2.6" rx="0.5"/><rect x="18.9" y="18.9" width="13.9" height="2.6" rx="0.5"/><rect x="21.2" y="21.5" width="2.9" height="4.4" rx="0.5"/><rect x="21.2" y="23.5" width="4.9" height="2.3" rx="0.5"/><rect x="33.1" y="14.3" width="2.6" height="4.9" rx="0.5"/><rect x="35.1" y="18.9" width="2.9" height="2.6" rx="0.5"/><rect x="14.3" y="23.5" width="2.6" height="7.3" rx="0.5"/><rect x="14.3" y="28.5" width="9.9" height="2.3" rx="0.5"/><rect x="14.3" y="33.1" width="4.6" height="2.3" rx="0.5"/><rect x="18.9" y="30.8" width="2.9" height="7.3" rx="0.5"/><rect x="21.2" y="33.1" width="2.9" height="2.3" rx="0.5"/><path d="M2.4 0.0h7.1a2.4 2.4 0 0 1 2.4 2.4v7.1a2.4 2.4 0 0 1-2.4 2.4h-7.1a2.4 2.4 0 0 1-2.4-2.4v-7.1a2.4 2.4 0 0 1 2.4-2.4zM2.9 2.9v6.1h6.1v-6.1z"/><rect x="4.5" y="4.5" width="2.9" height="2.9" rx="0.4"/><path d="M28.6 0.0h7.1a2.4 2.4 0 0 1 2.4 2.4v7.1a2.4 2.4 0 0 1-2.4 2.4h-7.1a2.4 2.4 0 0 1-2.4-2.4v-7.1a2.4 2.4 0 0 1 2.4-2.4zM29.1 2.9v6.1h6.1v-6.1z"/><rect x="30.7" y="4.5" width="2.9" height="2.9" rx="0.4"/><path d="M2.4 25.9h7.1a2.4 2.4 0 0 1 2.4 2.4v7.1a2.4 2.4 0 0 1-2.4 2.4h-7.1a2.4 2.4 0 0 1-2.4-2.4v-7.1a2.4 2.4 0 0 1 2.4-2.4zM2.9 28.8v6.1h6.1v-6.1z"/><rect x="4.5" y="30.4" width="2.9" height="2.9" rx="0.4"/><path d="M28.6 25.9h7.1a2.4 2.4 0 0 1 2.4 2.4v7.1a2.4 2.4 0 0 1-2.4 2.4h-7.1a2.4 2.4 0 0 1-2.4-2.4v-7.1a2.4 2.4 0 0 1 2.4-2.4zM29.1 28.8v6.1h6.1v-6.1z"/><rect x="30.7" y="30.4" width="2.9" height="2.9" rx="0.4"/></g></svg></div>
 <div class="sw" style="left:1105.0px"><i></i></div>
 <div class="c" style="left:1249.0px">2025-11-14 00:51:06</div>
</div>
<div class="row" style="top:727.0px">
 <div class="cb" style="left:13px"></div>
 <div class="c" style="left:73.0px">1</div>
 <div class="c" style="left:157.0px;letter-spacing:-0.3px">1DE2F72DE21B</div>
 <div class="c" style="left:373.0px">0</div>
 <div class="c" style="left:493.0px;letter-spacing:0.3px">202511131147</div>
 <div class="prod" style="left:661.8px">联鹿<span style="letter-spacing:-0.9px">AED</span>便携式除<br>颤仪半自动体外除<br>颤器车载应急救护</div>
 <div class="pimg" style="left:829.0px"><svg width="58" height="58" viewBox="0 0 58 58">
<defs><linearGradient id="rg" x1="0" y1="0" x2="1" y2="0.3"><stop offset="0" stop-color="#e9553c"/><stop offset=".45" stop-color="#d9321f"/><stop offset="1" stop-color="#c41a16"/></linearGradient>
<linearGradient id="bm" x1="0" y1="0" x2="1" y2="1"><stop offset="0" stop-color="#f27a5c" stop-opacity=".0"/><stop offset=".5" stop-color="#f49a7a" stop-opacity=".55"/><stop offset="1" stop-color="#f27a5c" stop-opacity="0"/></linearGradient></defs>
<rect width="58" height="58" fill="url(#rg)"/>
<path d="M18 0H34L40 58H20z" fill="url(#bm)"/>
<g fill="#fbe3dc"><rect x="1" y="1.8" width="6" height="1.6"/><rect x="8" y="1.8" width="9" height="1.6"/><rect x="18" y="1.8" width="10" height="1.6"/><rect x="54" y="1.2" width="2.5" height="2.5" rx="1"/></g>
<g fill="#fff" opacity=".6"><rect x="0" y="8.3" width="3" height="6.2"/><rect x="4" y="8" width="5.5" height="6.6"/><rect x="10.5" y="8.5" width="5" height="6"/><rect x="17" y="8.3" width="6" height="6.3"/><rect x="26" y="8.5" width="4.5" height="6"/><rect x="31.5" y="8.5" width="4" height="6"/><rect x="36.5" y="8.5" width="4" height="6"/><rect x="42" y="8" width="5.5" height="6.6"/><rect x="48.5" y="8" width="5.5" height="6.6"/><rect x="55" y="8.3" width="3" height="6.2"/></g>
<rect x="0" y="16.5" width="22" height="41.5" fill="#cf2a1c"/>
<rect x="0.5" y="17" width="19" height="3.5" fill="#f8d9cc" opacity=".7"/>
<rect x="0" y="22" width="9" height="7" fill="#b4121a"/><rect x="3" y="24" width="3" height="3" fill="#fff"/>
<rect x="10" y="22.5" width="11" height="6.5" fill="#fde8e2"/><rect x="11.5" y="24.5" width="8" height="2" fill="#d44a3a"/>
<rect x="0" y="31" width="21" height="3.5" fill="#fbeae2"/>
<g><rect x="0.5" y="36" width="1.8" height="12" fill="#333"/><rect x="2.6" y="36" width="1.8" height="12" fill="#eee"/><rect x="4.7" y="36" width="1.8" height="12" fill="#b9d3a0"/><rect x="6.8" y="36" width="1.8" height="12" fill="#b8c8e8"/><rect x="8.9" y="36" width="1.8" height="12" fill="#d8c8ea"/></g>
<rect x="12" y="36" width="9" height="9" fill="#e34a30"/><rect x="12.5" y="40.5" width="8" height="3" fill="#f5d040"/>
<rect x="0" y="45.5" width="21" height="4" fill="#e86a5a"/>
<rect x="0" y="50.3" width="21" height="5.7" fill="#fff"/><rect x="1" y="51.5" width="8" height="3" fill="#555"/><rect x="14" y="51.5" width="5" height="3.5" fill="#e3302a"/>
<rect x="28" y="17" width="30" height="39.5" rx="5" fill="#f3f0ed"/>
<path d="M28 22Q28 17 33 17H58V21H33Q30 21 30 24V52H28Z" fill="#f4a060"/>
<rect x="31" y="21" width="27" height="1.5" fill="#f7c090" />
<rect x="39" y="21" width="3.5" height="5" fill="#f39b2c"/>
<rect x="51" y="26" width="7" height="4.5" fill="#e53a2a"/>
<circle cx="34.5" cy="27" r="1" fill="#555"/>
<rect x="39" y="31" width="12" height="4" fill="#d9d6d3"/>
<path d="M38 41c0-4 6-5.5 7-2 1-3.5 7-2 7 2 0 3.5-7 8-7 8s-7-4.5-7-8z" fill="#f28a2e"/>
<rect x="44.3" y="38.5" width="1.5" height="7" fill="#fbe0c8"/>
<rect x="39" y="50.2" width="11" height="1.6" fill="#f4a36a"/>
</svg>
</div>
 <div class="qr" style="left:961.9px"><svg width="38" height="38" viewBox="0 0 38 38"><g fill="#1890ff" fill-rule="evenodd"><rect x="14.3" y="0.5" width="7.5" height="2.7" rx="0.5"/><rect x="18.9" y="2.4" width="5.2" height="2.8" rx="0.5"/><rect x="16.6" y="5.0" width="5.2" height="4.6" rx="0.5"/><rect x="18.9" y="9.6" width="2.9" height="4.9" rx="0.5"/><rect x="2.6" y="14.3" width="4.6" height="2.6" rx="0.5"/><rect x="0.0" y="16.6" width="2.9" height="2.6" rx="0.5"/><rect x="9.0" y="14.3" width="2.9" height="2.6" rx="0.5"/><rect x="7.3" y="16.6" width="9.6" height="2.6" rx="0.5"/><rect x="9.0" y="19.2" width="2.9" height="4.9" rx="0.5"/><rect x="0.0" y="21.5" width="2.9" height="2.6" rx="0.5"/><rect x="16.6" y="14.3" width="12.2" height="2.6" rx="0.5"/><rect x="25.9" y="16.6" width="2.9" height="2.6" rx="0.5"/><rect x="18.9" y="18.9" width="13.9" height="2.6" rx="0.5"/><rect x="21.2" y="21.5" width="2.9" height="4.4" rx="0.5"/><rect x="21.2" y="23.5" width="4.9" height="2.3" rx="0.5"/><rect x="33.1" y="14.3" width="2.6" height="4.9" rx="0.5"/><rect x="35.1" y="18.9" width="2.9" height="2.6" rx="0.5"/><rect x="14.3" y="23.5" width="2.6" height="7.3" rx="0.5"/><rect x="14.3" y="28.5" width="9.9" height="2.3" rx="0.5"/><rect x="14.3" y="33.1" width="4.6" height="2.3" rx="0.5"/><rect x="18.9" y="30.8" width="2.9" height="7.3" rx="0.5"/><rect x="21.2" y="33.1" width="2.9" height="2.3" rx="0.5"/><path d="M2.4 0.0h7.1a2.4 2.4 0 0 1 2.4 2.4v7.1a2.4 2.4 0 0 1-2.4 2.4h-7.1a2.4 2.4 0 0 1-2.4-2.4v-7.1a2.4 2.4 0 0 1 2.4-2.4zM2.9 2.9v6.1h6.1v-6.1z"/><rect x="4.5" y="4.5" width="2.9" height="2.9" rx="0.4"/><path d="M28.6 0.0h7.1a2.4 2.4 0 0 1 2.4 2.4v7.1a2.4 2.4 0 0 1-2.4 2.4h-7.1a2.4 2.4 0 0 1-2.4-2.4v-7.1a2.4 2.4 0 0 1 2.4-2.4zM29.1 2.9v6.1h6.1v-6.1z"/><rect x="30.7" y="4.5" width="2.9" height="2.9" rx="0.4"/><path d="M2.4 25.9h7.1a2.4 2.4 0 0 1 2.4 2.4v7.1a2.4 2.4 0 0 1-2.4 2.4h-7.1a2.4 2.4 0 0 1-2.4-2.4v-7.1a2.4 2.4 0 0 1 2.4-2.4zM2.9 28.8v6.1h6.1v-6.1z"/><rect x="4.5" y="30.4" width="2.9" height="2.9" rx="0.4"/><path d="M28.6 25.9h7.1a2.4 2.4 0 0 1 2.4 2.4v7.1a2.4 2.4 0 0 1-2.4 2.4h-7.1a2.4 2.4 0 0 1-2.4-2.4v-7.1a2.4 2.4 0 0 1 2.4-2.4zM29.1 28.8v6.1h6.1v-6.1z"/><rect x="30.7" y="30.4" width="2.9" height="2.9" rx="0.4"/></g></svg></div>
 <div class="sw" style="left:1105.0px"><i></i></div>
 <div class="c" style="left:1249.0px">2025-11-14 00:51:06</div>
</div></div>
  <div class="thead">
    <div class="cb" style="left:13px;top:21px"></div>
    <div class="th" style="left:73px">ID</div>
    <div class="th" style="left:157px">防伪码</div>
    <div class="th" style="left:373px">查询次数</div>
    <div class="th" style="left:493px">批次号</div>
    <div class="th" style="left:661px">商品</div>
    <div class="th" style="left:829px">商品缩略图</div>
    <div class="th" style="left:961px">二维码</div>
    <div class="th" style="left:1105px">状态</div>
    <div class="th" style="left:1249px">创建时间</div>
  </div>
  <div class="vl" style="left:0"></div>
  <div class="vl" style="left:60px"></div>
  <div class="vl" style="left:144px"></div>
  <div class="vl" style="left:360px"></div>
  <div class="vl" style="left:480px"></div>
  <div class="vl" style="left:648px"></div>
  <div class="vl" style="left:816px"></div>
  <div class="vl" style="left:948px"></div>
  <div class="vl" style="left:1092px"></div>
  <div class="vl" style="left:1236px"></div>
</div>
<div class="fix"><div class="shd"></div><div class="clip">
  <div style="position:absolute;left:0;top:-218px;width:181px;height:1000px"><div class="frow" style="top:276.4px"><svg class="ico" style="left:9px" width="24" height="26" viewBox="0 0 24 26" fill="none" stroke="currentColor" stroke-width="1.3"><path d="M4.5 12.35L8.6 8.3Q10 7.25 12.5 7.25Q15 7.25 16.4 8.3L20.5 12.35L16.4 16.4Q15 17.45 12.5 17.45Q10 17.45 8.6 16.4Z"/><circle cx="12.4" cy="12.35" r="3.05"/></svg><span class="view">查看</span><svg class="ico t2" style="left:80px" width="24" height="26" viewBox="0 0 24 26" fill="none" stroke="currentColor" stroke-width="1.3"><path d="M4.3 7.6H19.6"/><path d="M9.4 7.4V5.4H14.5V7.4"/><path d="M6.6 7.6V19.2H17.3V7.6"/><path d="M10.4 10.6V16.4M13.5 10.6V16.4" stroke-linecap="round"/></svg><span class="del">删除</span></div>
<div class="frow stripe" style="top:388.9px"><svg class="ico" style="left:9px" width="24" height="26" viewBox="0 0 24 26" fill="none" stroke="currentColor" stroke-width="1.3"><path d="M4.5 12.35L8.6 8.3Q10 7.25 12.5 7.25Q15 7.25 16.4 8.3L20.5 12.35L16.4 16.4Q15 17.45 12.5 17.45Q10 17.45 8.6 16.4Z"/><circle cx="12.4" cy="12.35" r="3.05"/></svg><span class="view">查看</span><svg class="ico t2" style="left:80px" width="24" height="26" viewBox="0 0 24 26" fill="none" stroke="currentColor" stroke-width="1.3"><path d="M4.3 7.6H19.6"/><path d="M9.4 7.4V5.4H14.5V7.4"/><path d="M6.6 7.6V19.2H17.3V7.6"/><path d="M10.4 10.6V16.4M13.5 10.6V16.4" stroke-linecap="round"/></svg><span class="del">删除</span></div>
<div class="frow" style="top:501.4px"><svg class="ico" style="left:9px" width="24" height="26" viewBox="0 0 24 26" fill="none" stroke="currentColor" stroke-width="1.3"><path d="M4.5 12.35L8.6 8.3Q10 7.25 12.5 7.25Q15 7.25 16.4 8.3L20.5 12.35L16.4 16.4Q15 17.45 12.5 17.45Q10 17.45 8.6 16.4Z"/><circle cx="12.4" cy="12.35" r="3.05"/></svg><span class="view">查看</span><svg class="ico t2" style="left:80px" width="24" height="26" viewBox="0 0 24 26" fill="none" stroke="currentColor" stroke-width="1.3"><path d="M4.3 7.6H19.6"/><path d="M9.4 7.4V5.4H14.5V7.4"/><path d="M6.6 7.6V19.2H17.3V7.6"/><path d="M10.4 10.6V16.4M13.5 10.6V16.4" stroke-linecap="round"/></svg><span class="del">删除</span></div>
<div class="frow" style="top:613.9px"><svg class="ico" style="left:9px" width="24" height="26" viewBox="0 0 24 26" fill="none" stroke="currentColor" stroke-width="1.3"><path d="M4.5 12.35L8.6 8.3Q10 7.25 12.5 7.25Q15 7.25 16.4 8.3L20.5 12.35L16.4 16.4Q15 17.45 12.5 17.45Q10 17.45 8.6 16.4Z"/><circle cx="12.4" cy="12.35" r="3.05"/></svg><span class="view">查看</span><svg class="ico t2" style="left:80px" width="24" height="26" viewBox="0 0 24 26" fill="none" stroke="currentColor" stroke-width="1.3"><path d="M4.3 7.6H19.6"/><path d="M9.4 7.4V5.4H14.5V7.4"/><path d="M6.6 7.6V19.2H17.3V7.6"/><path d="M10.4 10.6V16.4M13.5 10.6V16.4" stroke-linecap="round"/></svg><span class="del">删除</span></div>
<div class="frow" style="top:726.4px"><svg class="ico" style="left:9px" width="24" height="26" viewBox="0 0 24 26" fill="none" stroke="currentColor" stroke-width="1.3"><path d="M4.5 12.35L8.6 8.3Q10 7.25 12.5 7.25Q15 7.25 16.4 8.3L20.5 12.35L16.4 16.4Q15 17.45 12.5 17.45Q10 17.45 8.6 16.4Z"/><circle cx="12.4" cy="12.35" r="3.05"/></svg><span class="view">查看</span><svg class="ico t2" style="left:80px" width="24" height="26" viewBox="0 0 24 26" fill="none" stroke="currentColor" stroke-width="1.3"><path d="M4.3 7.6H19.6"/><path d="M9.4 7.4V5.4H14.5V7.4"/><path d="M6.6 7.6V19.2H17.3V7.6"/><path d="M10.4 10.6V16.4M13.5 10.6V16.4" stroke-linecap="round"/></svg><span class="del">删除</span></div></div>
  <div class="fh"><div class="th" style="left:13px">操作</div></div>
</div></div>

<div class="foot"><span class="t" style="left:24.3px">网络科技有限公司</span><span class="t" style="left:182.3px">底部版权</span><svg class="abs" style="left:161px;top:17px" width="17" height="17" viewBox="0 0 17 17" fill="none" stroke="#7152cc"><circle cx="8.4" cy="8.5" r="7" stroke-width="1.9"/><path d="M11.1 6.2A3.3 3.5 0 1 0 11.1 10.8" stroke-width="1.5"/></svg></div>
<div class="mbar"><div class="th2"></div></div>

</body></html>
